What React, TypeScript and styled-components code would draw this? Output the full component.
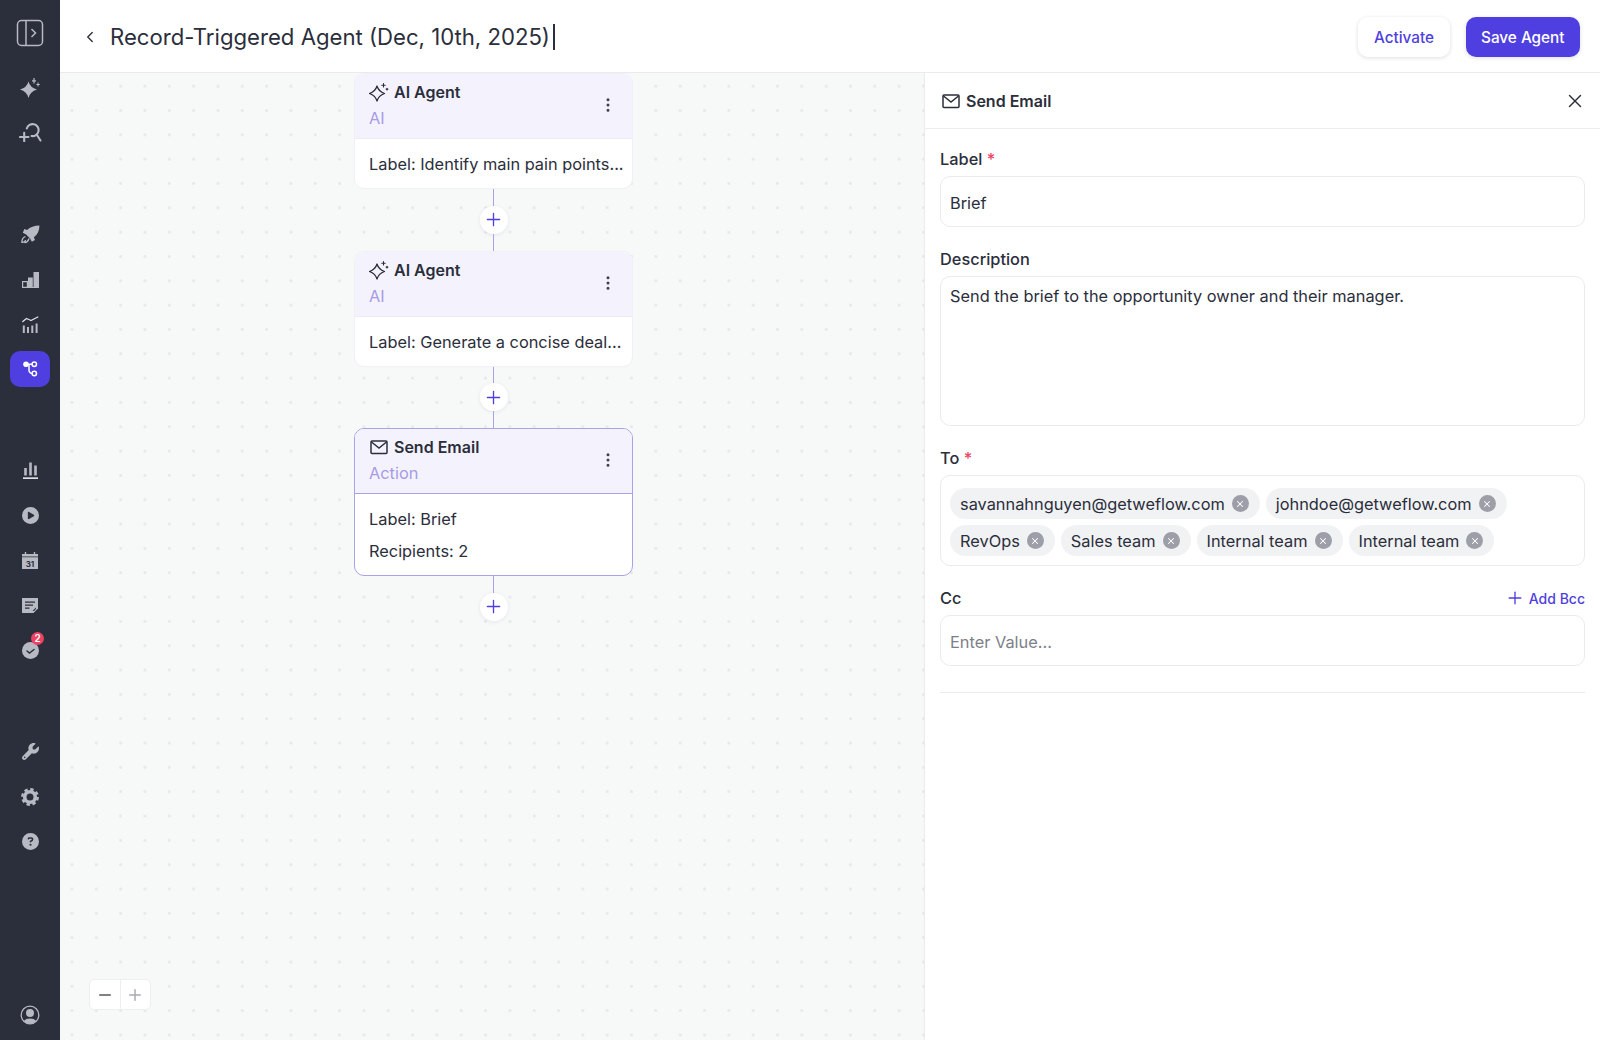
import React from 'react';
import styled, { createGlobalStyle } from 'styled-components';
import { ChevronLeft, EllipsisVertical, Minus, Plus, X } from 'lucide-react';
import { FaCirclePlay, FaCircleQuestion, FaWrench } from 'react-icons/fa6';

const GlobalStyle = createGlobalStyle`
  * { box-sizing: border-box; }
  html, body { margin: 0; height: 100%; }
  body {
    font-family: Inter, "Liberation Sans", sans-serif;
    font-size: 16.35px;
    color: #2b2e3b;
    background: #fff;
    overflow: hidden;
  }
`;

const Page = styled.div`
  display: flex;
  width: 1600px;
  height: 1040px;
`;

const Sidebar = styled.nav`
  width: 60px;
  flex: none;
  background: #2b2e3b;
  display: flex;
  flex-direction: column;
  align-items: center;
  color: #b7b9c3;
  padding: 19px 0 12px;
`;

const NavGroup = styled.div<{ $top?: number }>`
  display: flex;
  flex-direction: column;
  align-items: center;
  gap: 18px;
  margin-top: ${(p) => (p.$top === undefined ? 'auto' : `${p.$top}px`)};
`;

const NavItem = styled.div<{ $active?: boolean }>`
  position: relative;
  width: 40px;
  height: ${(p) => (p.$active ? 36 : 27)}px;
  margin: ${(p) => (p.$active ? '-5px 0 0' : '0')};
  display: flex;
  align-items: center;
  justify-content: center;
  border-radius: 10px;
  background: ${(p) => (p.$active ? '#4f3fe0' : 'transparent')};
  color: ${(p) => (p.$active ? '#fff' : 'inherit')};
`;

const Badge = styled.span`
  position: absolute;
  top: -5px;
  right: 6px;
  width: 13px;
  height: 13px;
  border-radius: 50%;
  background: #ee4264;
  color: #fff;
  font-size: 10px;
  font-weight: 600;
  line-height: 13px;
  text-align: center;
`;

const Main = styled.div`
  flex: 1;
  min-width: 0;
  display: flex;
  flex-direction: column;
`;

const Header = styled.header`
  height: 73px;
  flex: none;
  display: flex;
  align-items: center;
  padding: 2px 20px 0 21px;
  border-bottom: 1px solid #e9ebec;
  background: #fff;
`;

const BackIcon = styled(ChevronLeft)`
  color: #2b2e3b;
  margin-right: 11px;
`;

const Title = styled.h1`
  margin: 0;
  font-size: 22.15px;
  font-weight: 400;
  line-height: 32px;
  color: #2b2e3b;
`;

const Caret = styled.span`
  width: 2px;
  height: 26px;
  margin-left: 3px;
  background: #2b2e3b;
`;

const HeaderActions = styled.div`
  margin-left: auto;
  display: flex;
  gap: 16px;
`;

const Button = styled.button<{ $primary?: boolean }>`
  height: 40px;
  padding: 0 15.500px;
  border: none;
  border-radius: 10px;
  font: 500 15.3px Inter, sans-serif;
  color: ${(p) => (p.$primary ? '#fff' : '#4f3fe0')};
  background: ${(p) => (p.$primary ? '#4f3fe0' : '#fff')};
  box-shadow: 0 1px 4px rgba(30, 30, 60, 0.14);
`;

const Content = styled.div`
  flex: 1;
  min-height: 0;
  display: flex;
`;

const Canvas = styled.section`
  position: relative;
  flex: 1;
  padding-left: 294px;
  background-color: #f7f8f8;
  background-image: radial-gradient(circle, #e6e8e9 1.2px, transparent 1.6px);
  background-size: 24.33px 24.33px;
  background-position: -0.2px 1px;
`;

const Flow = styled.div`
  width: 279px;
  display: flex;
  flex-direction: column;
  align-items: center;
`;

const Node = styled.article<{ $selected?: boolean }>`
  width: 100%;
  background: #fff;
  border: 1px solid ${(p) => (p.$selected ? '#a9a2e6' : '#f0f0f6')};
  border-radius: 10px;
  overflow: hidden;
`;

const NodeHead = styled.div<{ $selected?: boolean }>`
  height: 65px;
  display: flex;
  align-items: center;
  justify-content: space-between;
  padding: 0 15px 2px 14px;
  background: #f4f3fd;
  border-bottom: 1px solid ${(p) => (p.$selected ? '#a9a2e6' : '#ecebf8')};
  color: #4b4d59;
`;

const NodeTitle = styled.div`
  display: flex;
  align-items: center;
  gap: 5px;
  font-size: 16px;
  font-weight: 600;
  line-height: 24px;
  color: #2b2e3b;
`;

const NodeKind = styled.div`
  color: #a79be6;
  line-height: 24px;
  margin-top: 2px;
`;

const NodeBody = styled.div`
  display: flex;
  flex-direction: column;
  gap: 8px;
  padding: 13px 14px 12px;
  line-height: 24px;
  white-space: nowrap;
`;

const Connector = styled.div`
  width: 1px;
  height: 16.75px;
  background: #a9a2e6;
`;

const AddButton = styled.button`
  width: 28px;
  height: 28px;
  padding: 0;
  border: none;
  border-radius: 50%;
  display: flex;
  align-items: center;
  justify-content: center;
  background: #fff;
  color: #4f3fe0;
  box-shadow: 0 1px 4px rgba(30, 30, 60, 0.08);
`;

const ZoomControl = styled.div`
  position: absolute;
  left: 29px;
  bottom: 30px;
  width: 62px;
  height: 31px;
  display: flex;
  background: #fff;
  border: 1px solid #eceeef;
  border-radius: 5px;
`;

const ZoomStep = styled.span<{ $muted?: boolean }>`
  flex: 1;
  display: flex;
  align-items: center;
  justify-content: center;
  color: ${(p) => (p.$muted ? '#a9abb0' : '#55575f')};
  & + & { border-left: 1px solid #eceeef; }
`;

const Panel = styled.aside`
  width: 676px;
  flex: none;
  background: #fff;
  border-left: 1px solid #e9ebec;
  display: flex;
  flex-direction: column;
`;

const PanelHead = styled.div`
  height: 56px;
  flex: none;
  display: flex;
  align-items: center;
  gap: 5px;
  padding: 0 14px 0 16px;
  border-bottom: 1px solid #ebedee;
  font-size: 16px;
  font-weight: 600;
`;

const CloseIcon = styled(X)`
  margin-left: auto;
  color: #2b2e3b;
`;

const PanelBody = styled.div`
  padding: 18px 15px 0;
  display: flex;
  flex-direction: column;
`;

const FieldRow = styled.div`
  display: flex;
  align-items: center;
  justify-content: space-between;
  height: 24px;
  margin-bottom: 5px;
`;

const FieldLabel = styled.label`
  font-weight: 500;
  line-height: 24px;
`;

const Required = styled.span`
  color: #ee4264;
`;

const Field = styled.div<{ $h: number; $muted?: boolean }>`
  height: ${(p) => p.$h}px;
  margin-bottom: 20px;
  padding: 14px 9px;
  border: 1px solid #e9ebec;
  border-radius: 10px;
  line-height: 24px;
  color: ${(p) => (p.$muted ? '#7d7f88' : '#2b2e3b')};
`;

const Area = styled(Field)`
  padding-top: 7px;
`;

const Chips = styled.div`
  height: 91px;
  margin-bottom: 20px;
  padding: 12px 9px;
  border: 1px solid #e9ebec;
  border-radius: 10px;
  display: flex;
  flex-wrap: wrap;
  align-content: flex-start;
  gap: 6px;
`;

const Chip = styled.span`
  height: 31px;
  padding: 0 11px 0 10px;
  display: flex;
  align-items: center;
  gap: 7px;
  border-radius: 16px;
  background: #f1f2f3;
  line-height: 24px;
`;

const ChipClose = styled.span`
  width: 17px;
  height: 17px;
  border-radius: 50%;
  display: flex;
  align-items: center;
  justify-content: center;
  background: #9d9fa8;
  color: #fff;
`;

const AddBcc = styled.span`
  display: flex;
  align-items: center;
  gap: 4px;
  font-size: 14px;
  font-weight: 500;
  color: #4f3fe0;
`;

const Rule = styled.hr`
  margin: 6px 0 0;
  border: none;
  border-top: 1px solid #e9ebec;
`;

const Sparkle = () => (
  <svg width="20" height="20" viewBox="0 0 20 20" fill="none" stroke="currentColor" strokeWidth="1.3" strokeLinejoin="round" strokeLinecap="round">
    <path d="M8 4Q9.600 9.400 15.500 11.500Q9.600 13.600 8 19Q6.400 13.600.5 11.500Q6.400 9.400 8 4z" />
    <path d="M14.500 1.500v3.400M12.800 3.200h3.400M18 6.200v1.800M17.100 7.100h1.800" strokeWidth="1.100" />
  </svg>
);

const MailGlyph = () => (
  <svg width="20" height="20" viewBox="0 0 20 20" fill="none" stroke="currentColor" strokeWidth="1.5">
    <rect x="2" y="4" width="16" height="12.500" rx="1" />
    <path d="M2.500 5l7.500 6 7.500-6" />
  </svg>
);

const navTop = [
  <svg key="s" width="20" height="20" viewBox="0 0 20 20" fill="currentColor">
    <path d="M8.500 3.500Q10 9.500 17 11.500Q10 13.500 8.500 20Q7 13.500 0 11.500Q7 9.500 8.500 3.500z" />
    <path d="M12 2.200h1.400V0h1.200v2.200H16v1.200h-1.400v2.200h-1.200V3.400H12zM16.400 6h1.100V4.400h1V6h1.300v1h-1.300v1.500h-1V7h-1.100z" />
  </svg>,
  <svg key="q" width="23" height="19" viewBox="0 0 23 19" fill="none" stroke="currentColor" strokeWidth="2.100" strokeLinecap="round">
    <path d="M7.800 5.500A6 6 0 1 1 12.500 13" />
    <path d="M17.800 11.800L21.500 17.500M1 14h8.500M5.200 9.800v8.500" />
  </svg>,
];

const navMiddle = [
  <svg key="r" width="19" height="19" viewBox="0 0 17 17" fill="currentColor">
    <path d="M16.500.5C16.500 5 15 8.500 11.500 11l1 2.500-2.800 1.500-1.600-3-3.500-3.500-3-1.500L3 3.500l2.500 1C8 2 12 .6 16.500.5z" />
    <path d="M3.500 10.500c-1.700.8-2.800 2.500-2.700 5 1.400.2 2.500-.4 3.200-1.500M7 12.500c-.5 1.500-1.600 3-3.400 3.200" fill="none" stroke="currentColor" strokeWidth="1.200" strokeLinecap="round" />
  </svg>,
  <svg key="b" width="17" height="16" viewBox="0 0 17 16" fill="currentColor">
    <path d="M.6 9.600h4.800v5.800H.6z" fill="none" stroke="currentColor" strokeWidth="1.200" />
    <path d="M6 5.500h4.800V16H6zM11.500 0H17v16h-5.500zM0 15h17v1H0z" />
  </svg>,
  <svg key="c" width="17" height="17" viewBox="0 0 17 17" fill="currentColor">
    <path d="M.8 5.500L4.500 2.500 9 4.500l6.800-3.500" fill="none" stroke="#e2e3e8" strokeWidth="1.300" strokeLinecap="round" strokeLinejoin="round" />
    <path d="M.8 9.500h2V17h-2zM5 11h2v6H5zM9.300 9.500h2V17h-2zM13.600 7.500h2V17h-2z" />
  </svg>,
];

const navLower = [
  <svg key="b2" width="15" height="17" viewBox="0 0 15 17" fill="currentColor">
    <path d="M1.200 6h2.600v7.500H1.200zM6.200.5h2.600v13H6.200zM11.200 3.500h2.600v10h-2.600z" />
    <path d="M0 15.300h15V17H0z" fill="#dfe0e6" />
  </svg>,
  <FaCirclePlay key="p" size={17} />,
  <svg key="cal" width="16" height="17" viewBox="0 0 16 17" fill="currentColor">
    <path d="M0 2h2.800V0h1.400v2h7.600V0h1.400v2H16v2.500H0zM0 5.300h16V17H0z" />
    <text x="8" y="14.500" fontSize="8" fontWeight="700" textAnchor="middle" fill="#2b2e3b" fontFamily="Inter, sans-serif">31</text>
  </svg>,
  <svg key="n" width="16" height="15" viewBox="0 0 16 15" fill="currentColor">
    <path d="M0 0h16v10.500L11.500 15H0z" />
    <path d="M3 3.500h10v1.300H3zM3 6.500h8v1.300H3zM3 9.500h4.500v1.300H3zM10.500 13l3.500-3.500v1.500l-2 2z" fill="#2b2e3b" />
  </svg>,
  <svg key="ch" width="17" height="17" viewBox="0 0 17 17" fill="currentColor">
    <circle cx="8.500" cy="8.500" r="8.500" />
    <path d="M5 9l2.500 2L12 7.500" fill="none" stroke="#2b2e3b" strokeWidth="1.500" strokeLinecap="round" />
  </svg>,
];

const navTools = [
  <FaWrench key="w" size={17} />,
  <svg key="g" width="18" height="18" viewBox="0 0 18 18" fill="none" stroke="currentColor">
    <circle cx="9" cy="9" r="5.300" strokeWidth="3.600" />
    <circle cx="9" cy="9" r="7.700" strokeWidth="2.400" strokeDasharray="3.400 2.650" />
  </svg>,
  <FaCircleQuestion key="h" size={17} />,
];

const recipients = [
  'savannahnguyen@getweflow.com',
  'johndoe@getweflow.com',
  'RevOps',
  'Sales team',
  'Internal team',
  'Internal team',
];

type AgentNodeProps = {
  icon: React.ReactNode;
  title: string;
  kind: string;
  lines: string[];
  selected?: boolean;
};

const AgentNode = ({ icon, title, kind, lines, selected }: AgentNodeProps) => (
  <Node $selected={selected}>
    <NodeHead $selected={selected}>
      <div>
        <NodeTitle>{icon}{title}</NodeTitle>
        <NodeKind>{kind}</NodeKind>
      </div>
      <EllipsisVertical size={18} color="#3f414d" />
    </NodeHead>
    <NodeBody>
      {lines.map((line) => <div key={line}>{line}</div>)}
    </NodeBody>
  </Node>
);

const AddStep = () => (
  <>
    <Connector />
    <AddButton><Plus size={21} strokeWidth={1.5} /></AddButton>
  </>
);

export default function App() {
  return (
    <Page>
      <GlobalStyle />
      <Sidebar>
        <svg width="28" height="28" viewBox="0 0 28 28" fill="none" stroke="currentColor" strokeWidth="1.500">
          <rect x="1.500" y="1.500" width="25" height="25" rx="4" />
          <path d="M10 1.500v25M15.500 10l4 4-4 4" />
        </svg>
        <NavGroup $top={27}>
          {navTop.map((icon, i) => <NavItem key={i}>{icon}</NavItem>)}
        </NavGroup>
        <NavGroup $top={75}>
          {navMiddle.map((icon, i) => <NavItem key={i}>{icon}</NavItem>)}
          <NavItem $active>
            <svg width="16" height="16" viewBox="0 0 16 16" fill="none" stroke="currentColor" strokeWidth="1.500">
              <circle cx="4" cy="3.200" r="2.800" fill="currentColor" stroke="none" />
              <circle cx="12.300" cy="3.200" r="2.200" />
              <circle cx="12.300" cy="12.500" r="2.200" />
              <path d="M6 3.200h4.100M7 3.200v6a3.300 3.300 0 0 0 3.300 3.300" />
            </svg>
          </NavItem>
        </NavGroup>
        <NavGroup $top={70}>
          {navLower.map((icon, i) => (
            <NavItem key={i}>
              {icon}
              {i === navLower.length - 1 && <Badge>2</Badge>}
            </NavItem>
          ))}
        </NavGroup>
        <NavGroup $top={74}>
          {navTools.map((icon, i) => <NavItem key={i}>{icon}</NavItem>)}
        </NavGroup>
        <NavGroup>
          <NavItem>
            <svg width="20" height="20" viewBox="0 0 20 20" fill="currentColor">
              <circle cx="10" cy="10" r="8.800" fill="none" stroke="currentColor" strokeWidth="1.300" />
              <circle cx="10" cy="8" r="4" />
              <path d="M3.800 16a7 4.500 0 0 1 12.400 0A8.500 8.500 0 0 1 3.800 16z" />
            </svg>
          </NavItem>
        </NavGroup>
      </Sidebar>
      <Main>
        <Header>
          <BackIcon size={18} strokeWidth={1.8} />
          <Title>Record-Triggered Agent (Dec, 10th, 2025)</Title>
          <Caret />
          <HeaderActions>
            <Button>Activate</Button>
            <Button $primary>Save Agent</Button>
          </HeaderActions>
        </Header>
        <Content>
          <Canvas>
            <Flow>
              <AgentNode icon={<Sparkle />} title="AI Agent" kind="AI" lines={['Label: Identify main pain points...']} />
              <AddStep />
              <Connector />
              <AgentNode icon={<Sparkle />} title="AI Agent" kind="AI" lines={['Label: Generate a concise deal...']} />
              <AddStep />
              <Connector />
              <AgentNode
                selected
                icon={<MailGlyph />}
                title="Send Email"
                kind="Action"
                lines={['Label: Brief', 'Recipients: 2']}
              />
              <AddStep />
            </Flow>
            <ZoomControl>
              <ZoomStep><Minus size={18} /></ZoomStep>
              <ZoomStep $muted><Plus size={18} /></ZoomStep>
            </ZoomControl>
          </Canvas>
          <Panel>
            <PanelHead>
              <MailGlyph />
              Send Email
              <CloseIcon size={22} strokeWidth={1.5} />
            </PanelHead>
            <PanelBody>
              <FieldRow><FieldLabel>Label <Required>*</Required></FieldLabel></FieldRow>
              <Field $h={51}>Brief</Field>
              <FieldRow><FieldLabel>Description</FieldLabel></FieldRow>
              <Area $h={150}>Send the brief to the opportunity owner and their manager.</Area>
              <FieldRow><FieldLabel>To <Required>*</Required></FieldLabel></FieldRow>
              <Chips>
                {recipients.map((name, i) => (
                  <Chip key={i}>
                    {name}
                    <ChipClose><X size={10} strokeWidth={2.5} /></ChipClose>
                  </Chip>
                ))}
              </Chips>
              <FieldRow>
                <FieldLabel>Cc</FieldLabel>
                <AddBcc><Plus size={20} strokeWidth={1.6} />Add Bcc</AddBcc>
              </FieldRow>
              <Field $h={51} $muted>Enter Value...</Field>
              <Rule />
            </PanelBody>
          </Panel>
        </Content>
      </Main>
    </Page>
  );
}
